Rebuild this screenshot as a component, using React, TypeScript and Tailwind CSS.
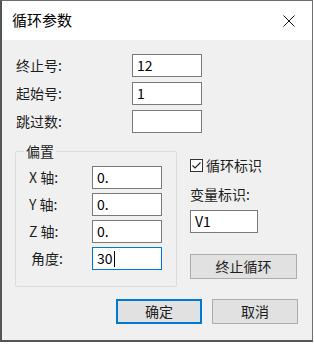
const font = { fontFamily: '"Noto Sans CJK SC", "Noto Sans", sans-serif' };

const Field = ({ value, focused }: { value: string; focused?: boolean }) => (
  <div
    className={
      "w-[70px] h-[23px] bg-white border flex items-center pl-[4px] text-[14px] text-black " +
      (focused ? "border-[#0078d7]" : "border-[#7a7a7a]")
    }
  >
    {value}
    {focused && <span className="w-px h-[16px] bg-black ml-px" />}
  </div>
);

const TopRow = ({ label, value }: { label: string; value: string }) => (
  <div className="flex items-center h-[23px]">
    <span className="w-[116px] text-[14px] text-[#1e1e1e]">{label}</span>
    <Field value={value} />
  </div>
);

const AxisRow = ({ label, value, indent, focused }: { label: string; value: string; indent: string; focused?: boolean }) => (
  <div className="flex items-center h-[23px]">
    <span className={"text-[14px] text-[#1e1e1e] " + indent}>{label}</span>
    <Field value={value} focused={focused} />
  </div>
);

export default function App() {
  return (
    <div className="w-[314px] h-[344px] bg-white" style={font}>
      <div className="w-[313px] h-[342px] border border-[#6e6e6e] border-l-2 border-b-2 border-l-[#555] border-b-[#555] bg-[#f0f0f0] flex flex-col">
        <div className="h-[39px] bg-white flex items-center justify-between pl-[10px] pr-[17px]">
          <span className="text-[15px] text-black">循环参数</span>
          <svg width="12" height="12" viewBox="0 0 12 12">
            <path d="M0.5 0.5 L11.5 11.5 M11.5 0.5 L0.5 11.5" stroke="#111" strokeWidth="1" />
          </svg>
        </div>

        <div className="flex flex-col gap-[5px] pt-[14px] pl-[14px]">
          <TopRow label="终止号:" value="12" />
          <TopRow label="起始号:" value="1" />
          <TopRow label="跳过数:" value="" />
        </div>

        <div className="flex mt-[8px]">
          <fieldset className="ml-[13px] w-[162px] h-[146px] border border-[#dcdcdc] rounded-[2px]">
            <legend className="ml-[8px] px-[2px] text-[14px] leading-[20px] text-[#1e1e1e]">偏置</legend>
            <div className="flex flex-col gap-[4px] pt-[5px]">
              <AxisRow label="X 轴:" value="0." indent="pl-[13px] w-[76px]" />
              <AxisRow label="Y 轴:" value="0." indent="pl-[13px] w-[76px]" />
              <AxisRow label="Z 轴:" value="0." indent="pl-[13px] w-[76px]" />
              <AxisRow label="角度:" value="30" indent="pl-[15px] w-[76px]" focused />
            </div>
          </fieldset>

          <div className="ml-[13px] pt-[17px] flex flex-col">
            <div className="flex items-center h-[14px]">
              <div className="w-[13px] h-[13px] border border-[#333] bg-white flex items-center justify-center">
                <svg width="11" height="11" viewBox="0 0 11 11">
                  <path d="M1.5 5.5 L4 8 L9.5 2.5" stroke="#222" strokeWidth="1.2" fill="none" />
                </svg>
              </div>
              <span className="ml-[3px] text-[14px] text-[#1e1e1e]">循环标识</span>
            </div>
            <span className="mt-[12px] text-[14px] leading-[20px] text-[#1e1e1e]">变量标识:</span>
            <div className="mt-[6px] w-[68px] h-[23px] bg-white border border-[#7a7a7a] flex items-center pl-[4px] text-[14px] text-black">
              V1
            </div>
            <button className="mt-[21px] w-[107px] h-[25px] bg-[#e1e1e1] border border-[#adadad] text-[14px] text-[#1e1e1e]">
              终止循环
            </button>
          </div>
        </div>

        <div className="flex justify-end gap-[10px] mt-[12px] pr-[14px]">
          <button className="w-[86px] h-[25px] bg-[#e1e1e1] border-2 border-[#0078d7] text-[14px] text-[#1e1e1e]">
            确定
          </button>
          <button className="w-[86px] h-[25px] bg-[#e1e1e1] border border-[#adadad] text-[14px] text-[#1e1e1e]">
            取消
          </button>
        </div>
      </div>
    </div>
  );
}
